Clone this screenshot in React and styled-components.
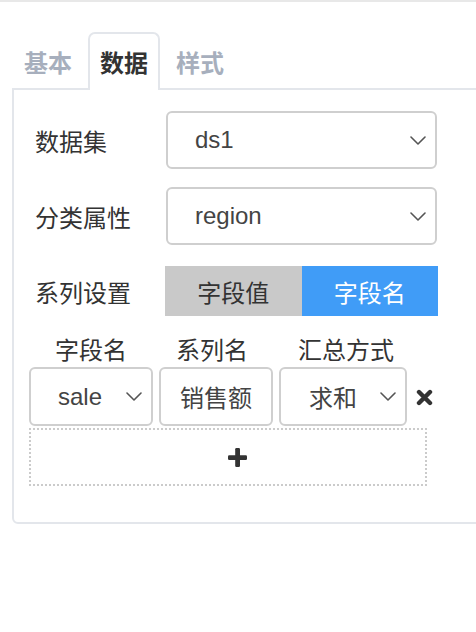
import styled, { createGlobalStyle } from 'styled-components'

const GlobalStyle = createGlobalStyle`
  html, body {
    margin: 0;
    padding: 0;
    overflow: hidden;
    background: #fff;
  }
  body {
    font-family: "Liberation Sans", "Noto Sans CJK SC", sans-serif;
    color: #333;
  }
  * { box-sizing: border-box; }
`

function Chevron() {
  return (
    <svg width="16" height="9" viewBox="0 0 16 9" fill="none">
      <polyline points="1,1 8,8 15,1" stroke="#555" strokeWidth="1.6" strokeLinecap="round" strokeLinejoin="round" />
    </svg>
  )
}

function RemoveIcon() {
  return (
    <svg width="17" height="17" viewBox="0 0 17 17">
      <path d="M3 3 L14 14 M14 3 L3 14" stroke="#333" strokeWidth="4.4" strokeLinecap="round" />
    </svg>
  )
}

function PlusIcon() {
  return (
    <svg width="19" height="19" viewBox="0 0 19 19">
      <rect x="7.2" y="0" width="4.8" height="19" rx="1.2" fill="#333" />
      <rect x="0" y="7.2" width="19" height="4.8" rx="1.2" fill="#333" />
    </svg>
  )
}

function Select({ value, width, height = 58, padLeft = 27 }) {
  return (
    <SelectBox $width={width} $height={height} $padLeft={padLeft}>
      <span>{value}</span>
      <Chevron />
    </SelectBox>
  )
}

export default function App() {
  return (
    <>
      <GlobalStyle />
      <TopBar />
      <Tabs>
        <Tab>基本</Tab>
        <Tab $active>数据</Tab>
        <Tab>样式</Tab>
      </Tabs>
      <Panel>
        <FieldRow>
          <Label>数据集</Label>
          <Select value="ds1" width={271} />
        </FieldRow>
        <FieldRow $gap={18}>
          <Label>分类属性</Label>
          <Select value="region" width={271} />
        </FieldRow>
        <FieldRow $gap={21}>
          <Label>系列设置</Label>
          <Toggle>
            <ToggleButton>字段值</ToggleButton>
            <ToggleButton $active>字段名</ToggleButton>
          </Toggle>
        </FieldRow>

        <SeriesHead>
          <HeadCell>字段名</HeadCell>
          <HeadCell $shift={-4}>系列名</HeadCell>
          <HeadCell $shift={3}>汇总方式</HeadCell>
        </SeriesHead>
        <SeriesRow>
          <Select value="sale" width={124} height={59} padLeft={27} />
          <TextInput>销售额</TextInput>
          <Select value="求和" width={128} height={59} padLeft={28} />
          <RemoveButton>
            <RemoveIcon />
          </RemoveButton>
        </SeriesRow>
        <AddBox>
          <PlusIcon />
        </AddBox>
      </Panel>
    </>
  )
}

/* ===== styles ===== */

const TopBar = styled.div`
  height: 2px;
  background: #e8e8e8;
`

const Tabs = styled.div`
  display: flex;
  align-items: flex-end;
  gap: 4px;
  margin-top: 30px;
  padding-left: 12px;
`

const Tab = styled.div`
  position: relative;
  z-index: 1;
  width: 72px;
  height: 58px;
  margin-bottom: -2px;
  padding-bottom: 2px;
  display: flex;
  align-items: center;
  justify-content: center;
  font-family: "Noto Sans CJK SC", sans-serif;
  font-size: 24px;
  font-weight: 700;
  color: ${({ $active }) => ($active ? '#333' : '#a7afbd')};
  background: ${({ $active }) => ($active ? '#fff' : 'transparent')};
  border: 2px solid ${({ $active }) => ($active ? '#e3e6eb' : 'transparent')};
  border-bottom: none;
  border-radius: 7px 7px 0 0;
`

const Panel = styled.div`
  margin-left: 12px;
  margin-right: -20px;
  height: 436px;
  border: 2px solid #e3e6eb;
  border-radius: 0 0 0 6px;
  padding: 21px 0 0 15px;
`

const FieldRow = styled.div`
  display: flex;
  align-items: center;
  padding-left: 6px;
  margin-top: ${({ $gap }) => $gap || 0}px;
`

const Label = styled.div`
  width: 131px;
  font-family: "Noto Sans CJK SC", sans-serif;
  font-size: 24px;
  color: #333;
`

const SelectBox = styled.div`
  width: ${({ $width }) => $width}px;
  height: ${({ $height }) => $height}px;
  display: flex;
  align-items: center;
  justify-content: space-between;
  padding: 0 9px 0 ${({ $padLeft }) => $padLeft}px;
  border: 2px solid #cfcfcf;
  border-radius: 6px;
  background: #fff;
  font-size: 24px;
  color: #444;
  flex-shrink: 0;

  span {
    font-family: "Liberation Sans", "Noto Sans CJK SC", sans-serif;
  }
`

const Toggle = styled.div`
  display: flex;
  width: 273px;
  height: 50px;
  margin-left: -1px;
`

const ToggleButton = styled.div`
  flex: 1;
  display: flex;
  align-items: center;
  justify-content: center;
  font-family: "Noto Sans CJK SC", sans-serif;
  font-size: 24px;
  color: ${({ $active }) => ($active ? '#fff' : '#333')};
  background: ${({ $active }) => ($active ? '#409cf7' : '#c9c9c9')};
`

const SeriesHead = styled.div`
  display: grid;
  grid-template-columns: 124px 114px 128px;
  column-gap: 6px;
  height: 37px;
  margin-top: 14px;
  align-items: center;
`

const HeadCell = styled.div`
  text-align: center;
  font-family: "Noto Sans CJK SC", sans-serif;
  font-size: 24px;
  color: #333;
  line-height: 37px;
  margin-left: ${({ $shift }) => ($shift || 0) * 2}px;
`

const SeriesRow = styled.div`
  display: grid;
  grid-template-columns: 124px 114px 128px auto;
  column-gap: 6px;
  align-items: center;
`

const TextInput = styled.div`
  height: 59px;
  display: flex;
  align-items: center;
  justify-content: center;
  border: 2px solid #cfcfcf;
  border-radius: 6px;
  font-family: "Noto Sans CJK SC", sans-serif;
  font-size: 24px;
  color: #444;
`

const RemoveButton = styled.div`
  display: flex;
  align-items: center;
  padding-left: 3px;
  padding-top: 2px;
`

const AddBox = styled.div`
  width: 398px;
  height: 58px;
  margin-top: 2px;
  display: flex;
  align-items: center;
  justify-content: center;
  padding-left: 19px;
  border: 2.5px dotted #cbcbcb;
`
